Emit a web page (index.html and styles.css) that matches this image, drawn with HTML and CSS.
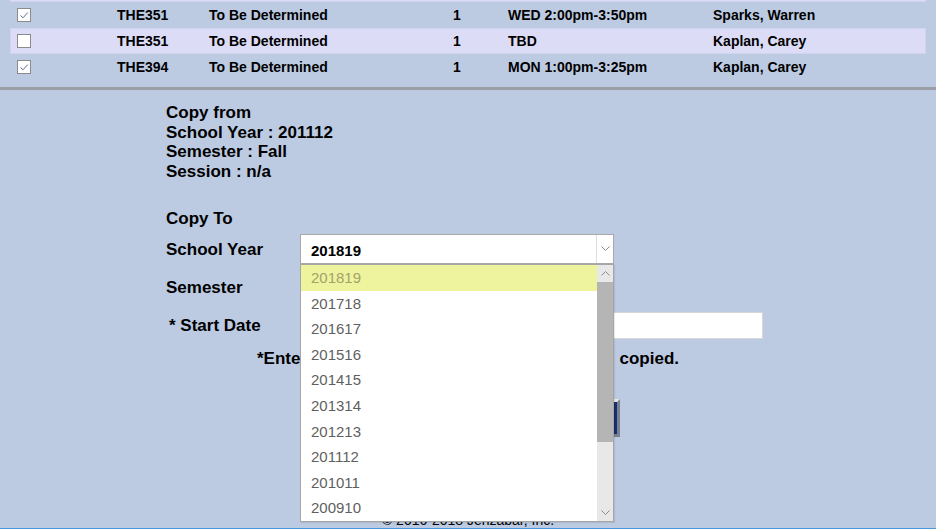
FILE: index.html
```html
<!DOCTYPE html>
<html lang="en">
<head>
<meta charset="utf-8">
<title>Copy Courses</title>
<link rel="stylesheet" href="styles.css">
</head>
<body>
<section class="courses">
  <div class="row alt"><span></span></div>
  <div class="row">
    <span class="cb"><svg viewBox="0 0 12 12" width="12" height="12"><polyline points="2.5,6.5 5,8.8 9.8,3.6" fill="none" stroke="#5a6f96" stroke-width="1"/></svg></span>
    <span>THE351</span><span>To Be Determined</span><span>1</span><span>WED 2:00pm-3:50pm</span><span>Sparks, Warren</span>
  </div>
  <div class="row alt">
    <span class="cb"></span>
    <span>THE351</span><span>To Be Determined</span><span>1</span><span>TBD</span><span>Kaplan, Carey</span>
  </div>
  <div class="row">
    <span class="cb"><svg viewBox="0 0 12 12" width="12" height="12"><polyline points="2.5,6.5 5,8.8 9.8,3.6" fill="none" stroke="#5a6f96" stroke-width="1"/></svg></span>
    <span>THE394</span><span>To Be Determined</span><span>1</span><span>MON 1:00pm-3:25pm</span><span>Kaplan, Carey</span>
  </div>
</section>

<main class="copy">
  <div class="from">
    <div>Copy from</div>
    <div>School Year : 201112</div>
    <div>Semester : Fall</div>
    <div>Session : n/a</div>
    <div class="to-title">Copy To</div>
  </div>

  <div class="form">
    <label class="lbl">School Year</label>
    <div class="select-wrap">
      <div class="select">
        <span class="select-val">201819</span>
        <span class="select-arrow"><svg width="9" height="5" viewBox="0 0 9 5"><polyline points="0.5,0.5 4.5,4.5 8.5,0.5" fill="none" stroke="#8c8c8c" stroke-width="1"/></svg></span>
      </div>
      <div class="dropdown">
        <ul class="list">
          <li class="sel">201819</li>
          <li>201718</li>
          <li>201617</li>
          <li>201516</li>
          <li>201415</li>
          <li>201314</li>
          <li>201213</li>
          <li>201112</li>
          <li>201011</li>
          <li>200910</li>
        </ul>
        <div class="sb">
          <span class="sb-btn"><svg width="9" height="5" viewBox="0 0 9 5"><polyline points="0.5,4.5 4.5,0.5 8.5,4.5" fill="none" stroke="#8c8c8c" stroke-width="1"/></svg></span>
          <span class="thumb"></span>
          <span class="track"></span>
          <span class="sb-btn"><svg width="9" height="5" viewBox="0 0 9 5"><polyline points="0.5,0.5 4.5,4.5 8.5,0.5" fill="none" stroke="#8c8c8c" stroke-width="1"/></svg></span>
        </div>
      </div>
    </div>

    <label class="lbl">Semester</label>
    <div class="select small"><span class="select-val">Fall</span></div>

    <label class="lbl star">* Start Date</label>
    <div class="input"></div>
  </div>

  <p class="note">*Enter a Start Date for all the courses to be <span class="last">copied.</span></p>

  <div class="actions">
    <button class="btn" type="button">Copy</button>
    <button class="btn" type="button">Cancel</button>
  </div>

  <footer class="foot">© 2016-2018 Jenzabar, Inc.</footer>
  <div class="bottombar"></div>
</main>
</body>
</html>
```

FILE: styles.css
```css
html, body {
  margin: 0;
  padding: 0;
}
body {
  background: #bccbe2;
  font-family: "Liberation Sans", Arial, sans-serif;
  color: #000;
  height: 529px;
  overflow: hidden;
}

/* course rows */
.courses {
  margin-top: -24px;
  padding: 0 10px 7px;
  border-bottom: 3px solid #9c9fa8;
}
.row {
  display: grid;
  grid-template-columns: 107px 92px 244px 55px 205px 1fr;
  align-items: center;
  height: 26px;
  font-size: 14px;
  font-weight: bold;
}
.row.alt {
  background: #dcdcf6;
  box-shadow: inset 0 0 0 1px #d1d4ef;
}
.cb {
  margin-left: 7px;
  width: 14px;
  height: 14px;
  box-sizing: border-box;
  border: 1px solid #8b8b8b;
  background: #fff;
  display: flex;
  align-items: center;
  justify-content: center;
}

/* copy section */
.copy {
  font-size: 17px;
  font-weight: bold;
  line-height: 19.6px;
}
.from {
  padding: 13px 0 0 166px;
}
.to-title {
  margin-top: 28px;
}
.form {
  margin-top: 5px;
  padding-left: 166px;
  display: grid;
  grid-template-columns: 134px auto;
  grid-auto-rows: 30px;
  row-gap: 7.5px;
  align-items: center;
  justify-items: start;
}
.lbl {
  padding-top: 2px;
}
.lbl.star {
  padding-top: 3px;
  padding-left: 3px;
}
.select-wrap {
  position: relative;
  width: 314px;
  height: 30px;
}
.select {
  width: 314px;
  height: 30px;
  box-sizing: border-box;
  border: 1px solid #a9a9a9;
  background: #fff;
  display: flex;
  align-items: stretch;
  font-size: 15px;
  font-weight: bold;
}
.select.small {
  width: 200px;
}
.select-val {
  flex: 1;
  padding: 3px 0 0 10px;
  display: flex;
  align-items: center;
}
.select-arrow {
  width: 16px;
  border-left: 1px solid #dedede;
  display: flex;
  align-items: center;
  justify-content: center;
}
.dropdown {
  position: absolute;
  left: 0;
  top: 30px;
  z-index: 5;
  width: 314px;
  height: 258px;
  box-sizing: border-box;
  border: 1px solid #a6a6a6;
  background: #fff;
  display: flex;
  box-shadow: 1px 1px 1px rgba(0, 0, 0, 0.08);
}
.list {
  flex: 1;
  margin: 0;
  padding: 0;
  list-style: none;
  font-size: 15px;
  font-weight: normal;
  color: #5f5f5f;
}
.list li {
  height: 25.6px;
  padding-left: 10px;
  display: flex;
  align-items: center;
}
.list li.sel {
  background: #eef49d;
  color: #a2a26c;
}
.sb {
  width: 16px;
  display: flex;
  flex-direction: column;
  background: #e8e8e8;
}
.sb-btn {
  height: 17px;
  display: flex;
  align-items: center;
  justify-content: center;
}
.thumb {
  height: 160px;
  background: #b5b5b5;
}
.track {
  flex: 1;
}
.input {
  align-self: end;
  width: 463px;
  height: 27px;
  box-sizing: border-box;
  border: 1px solid #d6d6d6;
  background: #fff;
}
.note {
  margin: 10px 0 0;
  text-align: center;
}
.note .last {
  margin-left: 12px;
}
.actions {
  margin-top: 30px;
  display: flex;
  justify-content: center;
  gap: 10px;
}
.btn {
  width: 147px;
  height: 38px;
  box-sizing: border-box;
  background: #14306e;
  color: #fff;
  font-family: "Liberation Sans", Arial, sans-serif;
  font-size: 15px;
  font-weight: bold;
  border: 3px solid #7b808c;
  border-top-color: #e6e6e6;
  border-left-color: #e6e6e6;
}
.foot {
  margin-top: 76px;
  text-align: center;
  font-size: 14px;
  font-weight: normal;
  line-height: 15px;
}
.bottombar {
  border-top: 2px solid #4a98de;
}
```
